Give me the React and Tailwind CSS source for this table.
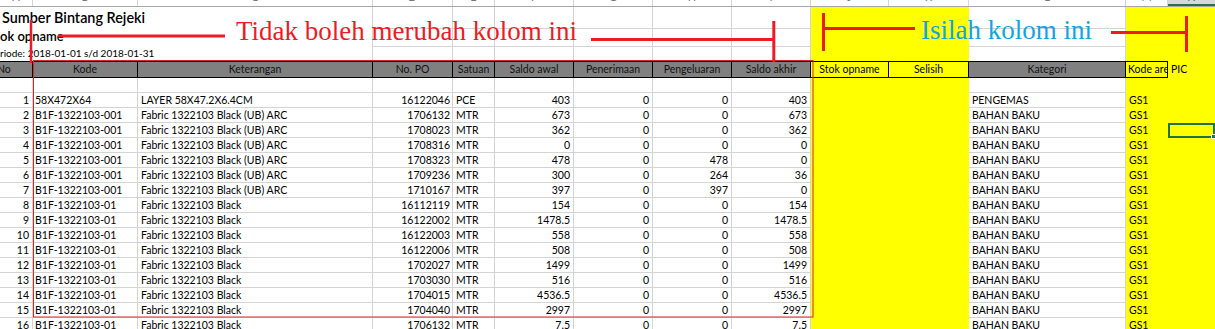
import React from "react";

const COLS =
  "grid grid-cols-[33px_105px_235px_80px_42px_79px_79px_79px_79px_78px_80px_157px_42px_47px]";
const GRID = "border-[#d4d4d4]";
const YELLOW = "bg-[#ffff00]";

const letters = ["A", "B", "C", "D", "E", "F", "G", "H", "I", "J", "K", "L", "M", "N"];

const headers = [
  { t: "No", cls: "text-left -ml-[3px]" },
  { t: "Kode", cls: "text-center" },
  { t: "Keterangan", cls: "text-center" },
  { t: "No. PO", cls: "text-center" },
  { t: "Satuan", cls: "text-center" },
  { t: "Saldo awal", cls: "text-center" },
  { t: "Penerimaan", cls: "text-center" },
  { t: "Pengeluaran", cls: "text-center" },
  { t: "Saldo akhir", cls: "text-center" },
];

const kodeA = "B1F-1322103-001";
const ketA = "Fabric 1322103 Black (UB) ARC";
const kodeB = "B1F-1322103-01";
const ketB = "Fabric 1322103 Black";

const rows = [
  [1, "58X472X64", "LAYER 58X47.2X6.4CM", "16122046", "PCE", "403", "0", "0", "403", "PENGEMAS"],
  [2, kodeA, ketA, "1706132", "MTR", "673", "0", "0", "673", "BAHAN BAKU"],
  [3, kodeA, ketA, "1708023", "MTR", "362", "0", "0", "362", "BAHAN BAKU"],
  [4, kodeA, ketA, "1708316", "MTR", "0", "0", "0", "0", "BAHAN BAKU"],
  [5, kodeA, ketA, "1708323", "MTR", "478", "0", "478", "0", "BAHAN BAKU"],
  [6, kodeA, ketA, "1709236", "MTR", "300", "0", "264", "36", "BAHAN BAKU"],
  [7, kodeA, ketA, "1710167", "MTR", "397", "0", "397", "0", "BAHAN BAKU"],
  [8, kodeB, ketB, "16112119", "MTR", "154", "0", "0", "154", "BAHAN BAKU"],
  [9, kodeB, ketB, "16122002", "MTR", "1478.5", "0", "0", "1478.5", "BAHAN BAKU"],
  [10, kodeB, ketB, "16122003", "MTR", "558", "0", "0", "558", "BAHAN BAKU"],
  [11, kodeB, ketB, "16122006", "MTR", "508", "0", "0", "508", "BAHAN BAKU"],
  [12, kodeB, ketB, "1702027", "MTR", "1499", "0", "0", "1499", "BAHAN BAKU"],
  [13, kodeB, ketB, "1703030", "MTR", "516", "0", "0", "516", "BAHAN BAKU"],
  [14, kodeB, ketB, "1704015", "MTR", "4536.5", "0", "0", "4536.5", "BAHAN BAKU"],
  [15, kodeB, ketB, "1704040", "MTR", "2997", "0", "0", "2997", "BAHAN BAKU"],
  [16, kodeB, ketB, "1706132", "MTR", "7.5", "0", "0", "7.5", "BAHAN BAKU"],
];

function TitleRow({ h, last, children }) {
  const b = last ? `border-r ${GRID}` : `border-r border-b ${GRID}`;
  return (
    <div className={`${COLS} ${h}`}>
      <div className={`col-span-3 flex items-center overflow-visible whitespace-nowrap border-r ${GRID}`}>
        {children}
      </div>
      {[0, 1, 2, 3, 4, 5].map((i) => (
        <div key={i} className={b} />
      ))}
      <div className={YELLOW} />
      <div className={YELLOW} />
      <div className={b} />
      <div className={YELLOW} />
      <div className={YELLOW} />
    </div>
  );
}

function DataRow({ r }) {
  const [no, kode, ket, po, sat, awal, terima, keluar, akhir, kat] = r;
  const c = `h-[15px] border-r border-b ${GRID} leading-[14px] whitespace-nowrap overflow-hidden`;
  return (
    <div className={COLS}>
      <div className={`${c} text-right pr-[3px]`}>{no}</div>
      <div className={`${c} pl-[2px]`}>{kode}</div>
      <div className={`${c} pl-[3px]`}>{ket}</div>
      <div className={`${c} text-right pr-[2px]`}>{po}</div>
      <div className={`${c} pl-[3px]`}>{sat}</div>
      <div className={`${c} text-right pr-[3px]`}>{awal}</div>
      <div className={`${c} text-right pr-[3px]`}>{terima}</div>
      <div className={`${c} text-right pr-[3px]`}>{keluar}</div>
      <div className={`${c} text-right pr-[3px]`}>{akhir}</div>
      <div className={YELLOW} />
      <div className={YELLOW} />
      <div className={`${c} pl-[3px]`}>{kat}</div>
      <div className={`${YELLOW} h-[15px] leading-[14px] pl-[3px]`}>GS1</div>
      {no === 3 ? (
        <div className={`${YELLOW} relative h-[15px] border-2 border-[#217346]`}>
          <span className="absolute -right-[3px] -bottom-[3px] h-[5px] w-[5px] border border-white bg-[#217346]" />
        </div>
      ) : (
        <div className={YELLOW} />
      )}
    </div>
  );
}

export default function App() {
  const hc = "h-[17px] border-t border-b border-r border-black leading-[15px] whitespace-nowrap overflow-hidden";
  const blank = `h-[15px] border-r border-b ${GRID}`;
  return (
    <div className="relative h-[329px] w-[1215px] overflow-hidden bg-white font-[family-name:'Lato','Liberation_Sans',sans-serif] text-[10.5px] text-black">
      {/* column letters, scrolled so only their feet show */}
      <div className={`${COLS} h-[7px] overflow-hidden border-b border-[#a8a8a8] bg-white`}>
        {letters.map((l) => (
          <div
            key={l}
            className={
              l === "N"
                ? "-mt-[9px] h-[15px] border-b-2 border-[#217346] bg-[#d8d8d8] text-center text-[11px] leading-[11px] text-[#217346]"
                : "-mt-[9px] h-[15px] border-r border-[#d4d4d4] text-center text-[11px] leading-[11px] text-[#777]"
            }
          >
            {l}
          </div>
        ))}
      </div>

      <TitleRow h="h-[20px]">
        <span className="pl-[2px] text-[14.4px] font-semibold">Sumber Bintang Rejeki</span>
      </TitleRow>
      <TitleRow h="h-[19px]">
        <span className="text-[13px] font-semibold">ok opname</span>
      </TitleRow>
      <TitleRow h="h-[15px]" last>
        <span className="text-[10px]">riode: 2018-01-01 s/d 2018-01-31</span>
      </TitleRow>

      {/* header row */}
      <div className={COLS}>
        {headers.map((h) => (
          <div key={h.t} className={`${hc} bg-[#808080] text-[#111]`}>
            <div className={h.cls}>{h.t}</div>
          </div>
        ))}
        <div className={`${hc} ${YELLOW} text-center`}>Stok opname</div>
        <div className={`${hc} ${YELLOW} text-center`}>Selisih</div>
        <div className={`${hc} bg-[#808080] text-center text-[#111]`}>Kategori</div>
        <div className={`${hc} ${YELLOW} pl-[2px]`}>Kode area</div>
        <div className={`${YELLOW} h-[17px] pl-[3px] pt-[1px] leading-[15px]`}>PIC</div>
      </div>

      {/* blank row */}
      <div className={COLS}>
        {[0, 1, 2, 3, 4, 5, 6, 7, 8].map((i) => (
          <div key={i} className={blank} />
        ))}
        <div className={YELLOW} />
        <div className={YELLOW} />
        <div className={blank} />
        <div className={YELLOW} />
        <div className={YELLOW} />
      </div>

      {rows.map((r) => (
        <DataRow key={r[0]} r={r} />
      ))}

      {/* hand-drawn annotations laid over the sheet */}
      <div className="pointer-events-none absolute inset-0">
        <svg width="1215" height="329" className="absolute left-0 top-0">
          <rect x="33.5" y="60.5" width="779.5" height="256.5" fill="none" stroke="#d7262f" strokeWidth="1" />
          <g stroke="#ed1c24" strokeWidth="3">
            <line x1="31" y1="20" x2="31" y2="63" strokeWidth="2.5" />
            <line x1="58" y1="36" x2="225" y2="36" />
            <line x1="591" y1="39.5" x2="775" y2="39.5" />
            <line x1="773.8" y1="21" x2="773.8" y2="62" />
            <line x1="823.5" y1="13" x2="823.5" y2="51" />
            <line x1="823" y1="28.5" x2="915" y2="28.5" />
            <line x1="1111" y1="32.5" x2="1187" y2="32.5" />
            <line x1="1186.5" y1="16" x2="1186.5" y2="52" />
          </g>
        </svg>
        <div className="absolute left-[236px] top-[18px] whitespace-nowrap font-[family-name:'Liberation_Serif',serif] text-[27px] leading-[27px] text-[#ed1c24]">
          Tidak boleh merubah kolom ini
        </div>
        <div className="absolute left-[921px] top-[17px] whitespace-nowrap font-[family-name:'Liberation_Serif',serif] text-[27px] leading-[27px] text-[#12a3e6]">
          Isilah kolom ini
        </div>
      </div>
    </div>
  );
}
